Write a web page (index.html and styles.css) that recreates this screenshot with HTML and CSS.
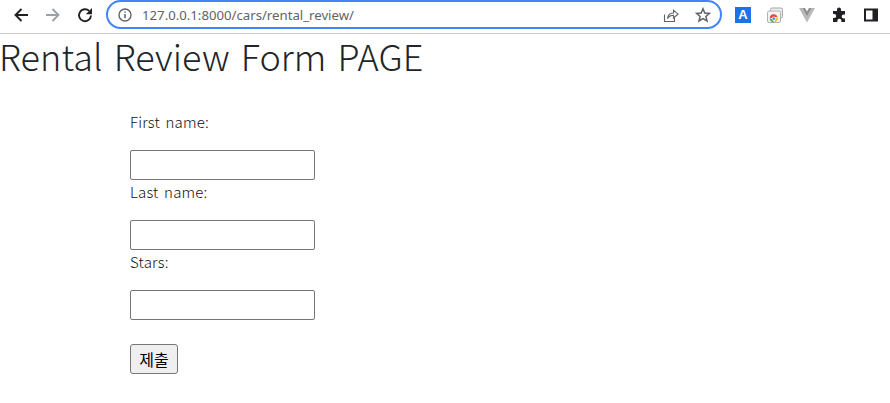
FILE: index.html
```html
<!DOCTYPE html>
<html lang="en">
<head>
  <meta charset="UTF-8" />
  <title>Rental Review Form</title>
  <link rel="stylesheet" href="styles.css">
</head>
<body>
  <!-- Browser toolbar -->
  <div class="toolbar">
    <div class="navButtons">
      <svg class="icon" viewBox="0 0 16 16"><path d="M15 8H2.5M8.5 2L2.5 8L8.5 14" fill="none" stroke="#202124" stroke-width="1.9"/></svg>
      <svg class="icon" viewBox="0 0 16 16"><path d="M1 8H13.5M7.5 2L13.5 8L7.5 14" fill="none" stroke="#9aa0a6" stroke-width="1.9"/></svg>
      <svg class="icon" viewBox="0 0 16 16"><path d="M14 8.5A6 6 0 1 1 12.2 3.9" fill="none" stroke="#202124" stroke-width="1.9"/><path d="M15 1V7.2H8.8z" fill="#202124"/></svg>
    </div>
    <div class="addressBar">
      <svg class="smallIcon" viewBox="0 0 14 14"><circle cx="7" cy="7" r="6" fill="none" stroke="#5f6368" stroke-width="1.4"/><path d="M7 6v4.2M7 3.4v1.4" stroke="#5f6368" stroke-width="1.5"/></svg>
      <span class="url">127.0.0.1:8000/cars/rental_review/</span>
      <svg class="shareIcon" viewBox="0 0 16 16"><path d="M1.5 7.5V14.5H11.5V11" fill="none" stroke="#5f6368" stroke-width="1.1"/><path d="M4.5 11.5C5 8 7.5 6 10.5 6V3.2L15 7.2L10.5 11V8.3C8 8.3 6 9.3 4.5 11.5Z" fill="none" stroke="#5f6368" stroke-width="1.1"/></svg>
      <svg class="starIcon" viewBox="0 0 16 16"><path d="M8 1.8L9.8 6L14.4 6.4L10.9 9.4L12 13.9L8 11.5L4 13.9L5.1 9.4L1.6 6.4L6.2 6Z" fill="none" stroke="#5f6368" stroke-width="1.5"/></svg>
    </div>
    <div class="extensions">
      <div class="translateExt">A</div>
      <svg class="extIcon" viewBox="0 0 16 16">
        <rect x="3.5" y="1" width="12" height="10" rx="1.5" fill="#eceded" stroke="#a5a7a9"/>
        <rect x="0.5" y="4" width="13" height="11.5" rx="1.5" fill="#f4f4f4" stroke="#b0b2b4"/>
        <path d="M2.8 11.5A4 4 0 0 1 10.6 10H7Z" fill="#ea4335"/>
        <path d="M10.6 10A4 4 0 0 1 7 15.4L8.6 12Z" fill="#fbbc04"/>
        <path d="M7 15.4A4 4 0 0 1 2.8 11.5L5 12Z" fill="#34a853"/>
        <circle cx="6.8" cy="11.6" r="1.7" fill="#4285f4" stroke="#fff" stroke-width="0.6"/>
      </svg>
      <svg class="extIcon" viewBox="0 0 16 16"><path d="M0 1H3.2L8 9.5L12.8 1H16L8 15.5Z" fill="#b9b9b9"/><path d="M3.2 1H6L8 4.6L10 1H12.8L8 9.5Z" fill="#8f8f8f"/></svg>
      <svg class="extIcon" viewBox="0 0 16 16"><path d="M6 2.5a2 2 0 0 1 4 0V4h4v3.6h-1.3a2 2 0 0 0 0 4H14V15H10.4v-1.2a2 2 0 0 0-4 0V15H2v-4h1.2a2 2 0 0 0 0-4H2V4h4Z" fill="#202124"/></svg>
      <svg class="extIcon" viewBox="0 0 16 16"><path d="M1 1.5H15V14.5H1ZM3 3.5V12.5H9.5V3.5Z" fill="#202124" fill-rule="evenodd"/></svg>
    </div>
  </div>

  <h1 class="pageTitle">Rental Review Form PAGE</h1>

  <!-- Review form -->
  <form class="reviewForm">
    <label class="fieldLabel" for="firstName">First name:</label>
    <input class="fieldInput" type="text" id="firstName" />
    <label class="fieldLabel" for="lastName">Last name:</label>
    <input class="fieldInput" type="text" id="lastName" />
    <label class="fieldLabel" for="stars">Stars:</label>
    <input class="fieldInput" type="text" id="stars" />
    <button class="submitButton" type="submit">제출</button>
  </form>
</body>
</html>
```

FILE: styles.css
```css
* {
  box-sizing: border-box;
}

body {
  margin: 0;
  font-family: "Noto Sans CJK KR", "Noto Sans", sans-serif;
  color: #212529;
  background-color: #fff;
}

.toolbar {
  display: flex;
  align-items: center;
  height: 34px;
  padding: 0 0 4px 13px;
  border-bottom: 1px solid #c9cacb;
  background-color: #fff;
}

.navButtons {
  display: flex;
  gap: 16px;
}

.icon {
  width: 16px;
  height: 16px;
}

.addressBar {
  display: flex;
  align-items: center;
  width: 616px;
  height: 29px;
  margin-left: 13px;
  padding: 0 9px 0 10px;
  border: 2px solid #4285f4;
  border-radius: 15px;
}

.smallIcon {
  width: 14px;
  height: 14px;
}

.url {
  flex: 1;
  margin-left: 10px;
  font-family: "Noto Sans", sans-serif;
  font-size: 13.2px;
  color: #5f6368;
}

.shareIcon,
.starIcon {
  width: 16px;
  height: 16px;
}

.shareIcon {
  margin-right: 16px;
}

.extensions {
  display: flex;
  align-items: center;
  gap: 16px;
  margin-left: 13px;
}

.translateExt {
  width: 16px;
  height: 16px;
  background-color: #1a73e8;
  color: #fff;
  font-family: "Liberation Sans", sans-serif;
  font-size: 13px;
  font-weight: bold;
  line-height: 16px;
  text-align: center;
}

.extIcon {
  width: 16px;
  height: 16px;
}

.pageTitle {
  margin: 0 0 34px -1px;
  font-size: 36px;
  font-weight: 300;
  line-height: 42px;
  letter-spacing: 0.07px;
  word-spacing: 3px;
}

.reviewForm {
  display: flex;
  flex-direction: column;
  align-items: flex-start;
  margin-left: 130px;
}

.fieldLabel {
  height: 24px;
  margin-bottom: 16px;
  color: #111;
  font-size: 15px;
  font-weight: 300;
  line-height: 24px;
  letter-spacing: 0.2px;
  word-spacing: 2px;
}

.fieldInput {
  width: 185px;
  height: 30px;
  border: 1px solid #767676;
  border-radius: 2px;
}

.submitButton {
  width: 48px;
  height: 30px;
  margin-top: 24px;
  padding: 0;
  border: 1px solid #767676;
  border-radius: 3px;
  background-color: #efefef;
  color: #000;
  font-family: inherit;
  font-size: 16px;
}
```
